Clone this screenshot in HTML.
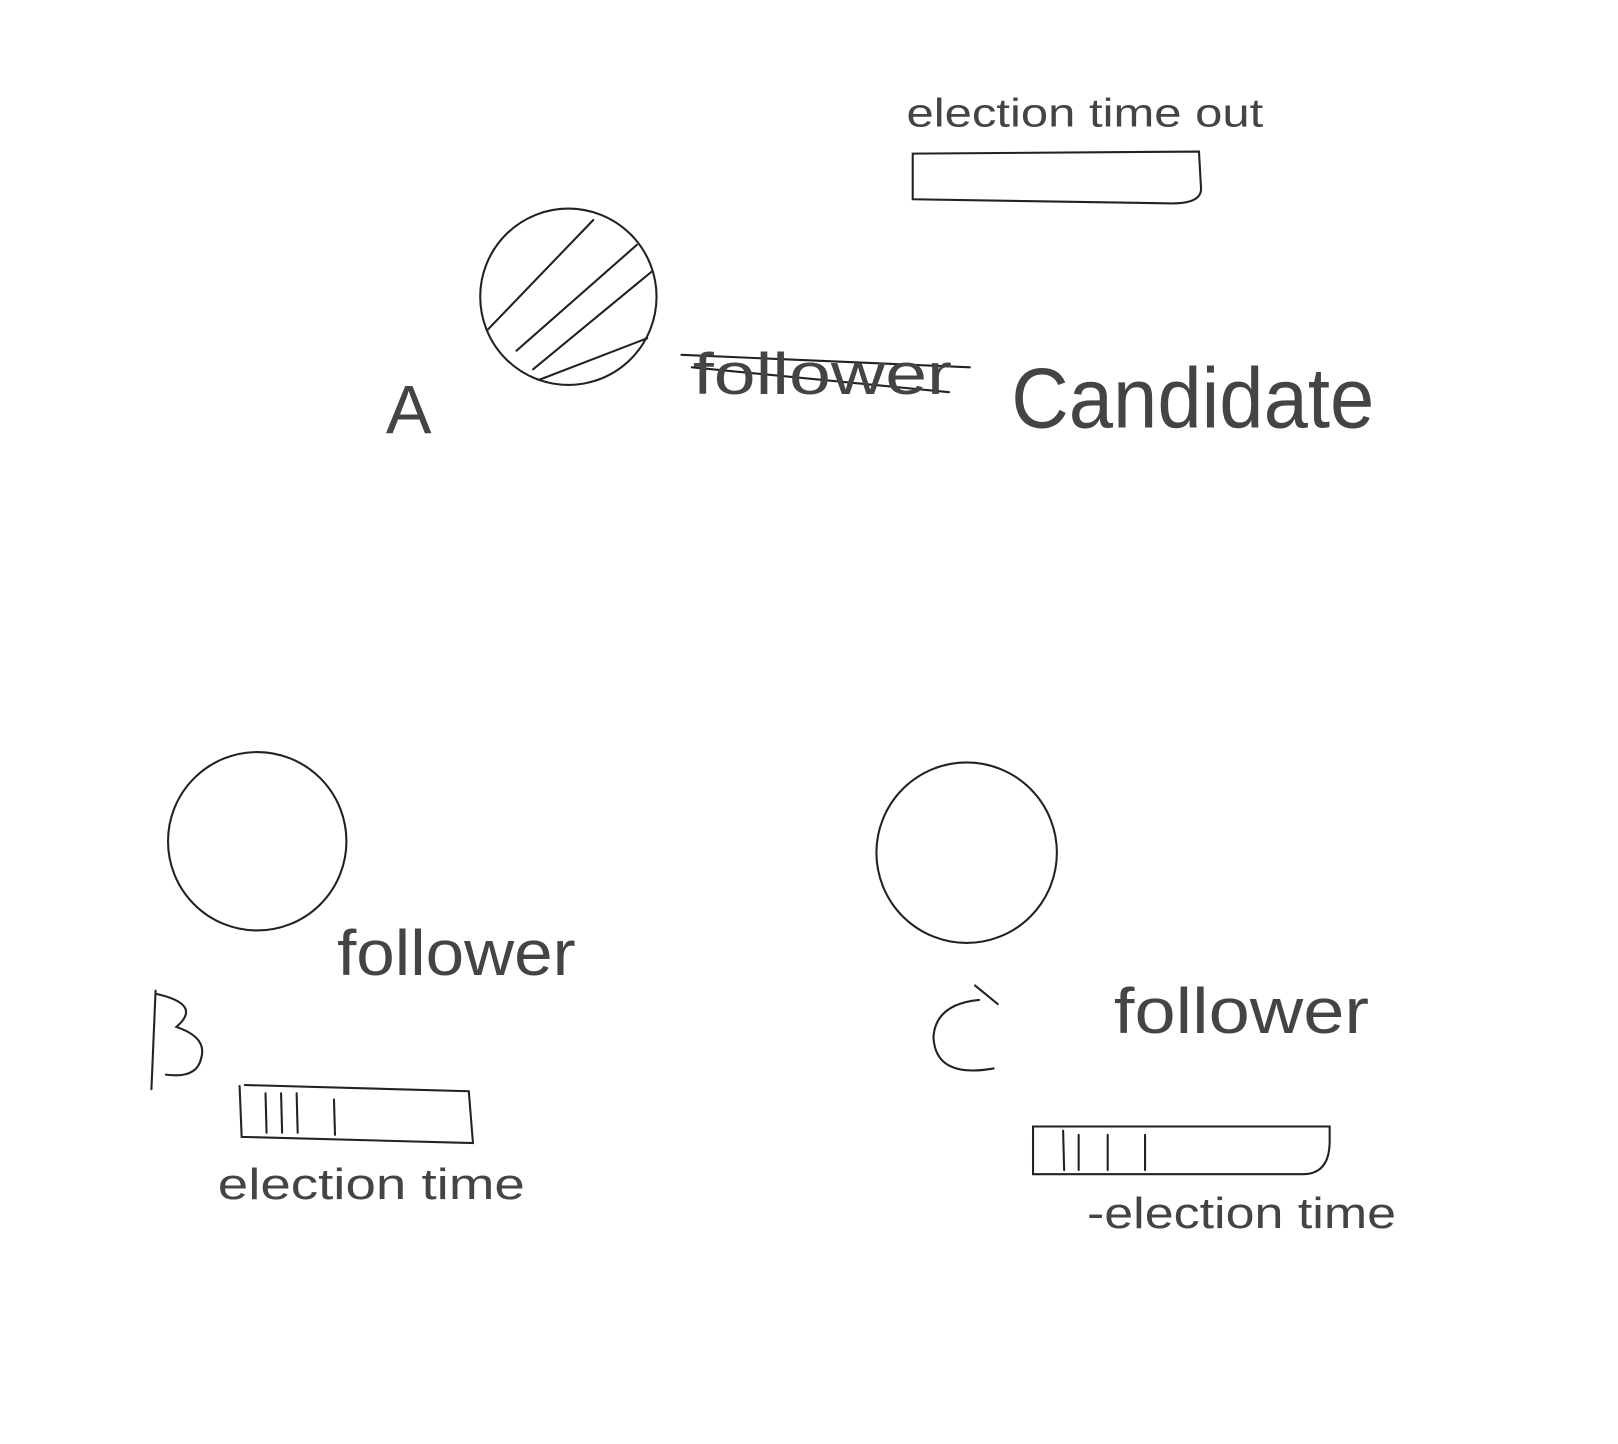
<!DOCTYPE html>
<html><head><style>
html,body{margin:0;padding:0;background:#fff;}
svg{display:block}
text{font-family:"Liberation Sans",sans-serif;fill:#444;font-weight:normal}
</style></head><body>
<svg width="1618" height="1444" viewBox="0 0 1560 1392" xmlns="http://www.w3.org/2000/svg">
<g fill="none" stroke="#222" stroke-width="2" stroke-linecap="round">
<circle cx="548" cy="286" r="85"/>
<path d="M470 318 L572 212 M498 338 L614 236 M514 356 L628 262 M520 366 L624 326"/>
<path d="M880 148 L1156 146 L1158 182 Q1158 196 1130 196 L880 192 Z"/>
<path d="M657 342 L935 354 M667 354 L915 378"/>
<circle cx="248" cy="811" r="86"/>
<path d="M231 1047 L233 1096 L456 1102 L452 1052 L236 1046 M256 1054 L257 1092 M271 1054 L272 1092 M286 1054 L287 1092 M322 1060 L323 1094"/>
<circle cx="932" cy="822" r="87"/>
<path d="M996 1086 L996 1132 L1256 1132 Q1282 1132 1282 1100 L1282 1086 Z M1025 1090 L1026 1128 M1040 1094 L1040 1128 M1068 1094 L1068 1128 M1104 1094 L1104 1128"/>
<path d="M944 964 Q902 968 900 1000 Q902 1040 958 1030"/>
<path d="M940 950 L962 968"/>
<path d="M150 955 L146 1050 M150 958 Q196 968 170 990 Q200 1000 194 1020 Q190 1040 160 1036"/>
</g>
<text x="874" y="122" font-size="38" textLength="344" lengthAdjust="spacingAndGlyphs">election time out</text>
<text x="372" y="418" font-size="66">A</text>
<text x="668" y="380" font-size="56" textLength="250" lengthAdjust="spacingAndGlyphs">follower</text>
<text x="975" y="412" font-size="82" textLength="350" lengthAdjust="spacingAndGlyphs">Candidate</text>
<text x="325" y="940" font-size="62" textLength="230" lengthAdjust="spacingAndGlyphs">follower</text>
<text x="210" y="1156" font-size="42" textLength="296" lengthAdjust="spacingAndGlyphs">election time</text>
<text x="1074" y="996" font-size="62" textLength="246" lengthAdjust="spacingAndGlyphs">follower</text>
<text x="1048" y="1184" font-size="42" textLength="298" lengthAdjust="spacingAndGlyphs">-election time</text>
</svg>
</body></html>
